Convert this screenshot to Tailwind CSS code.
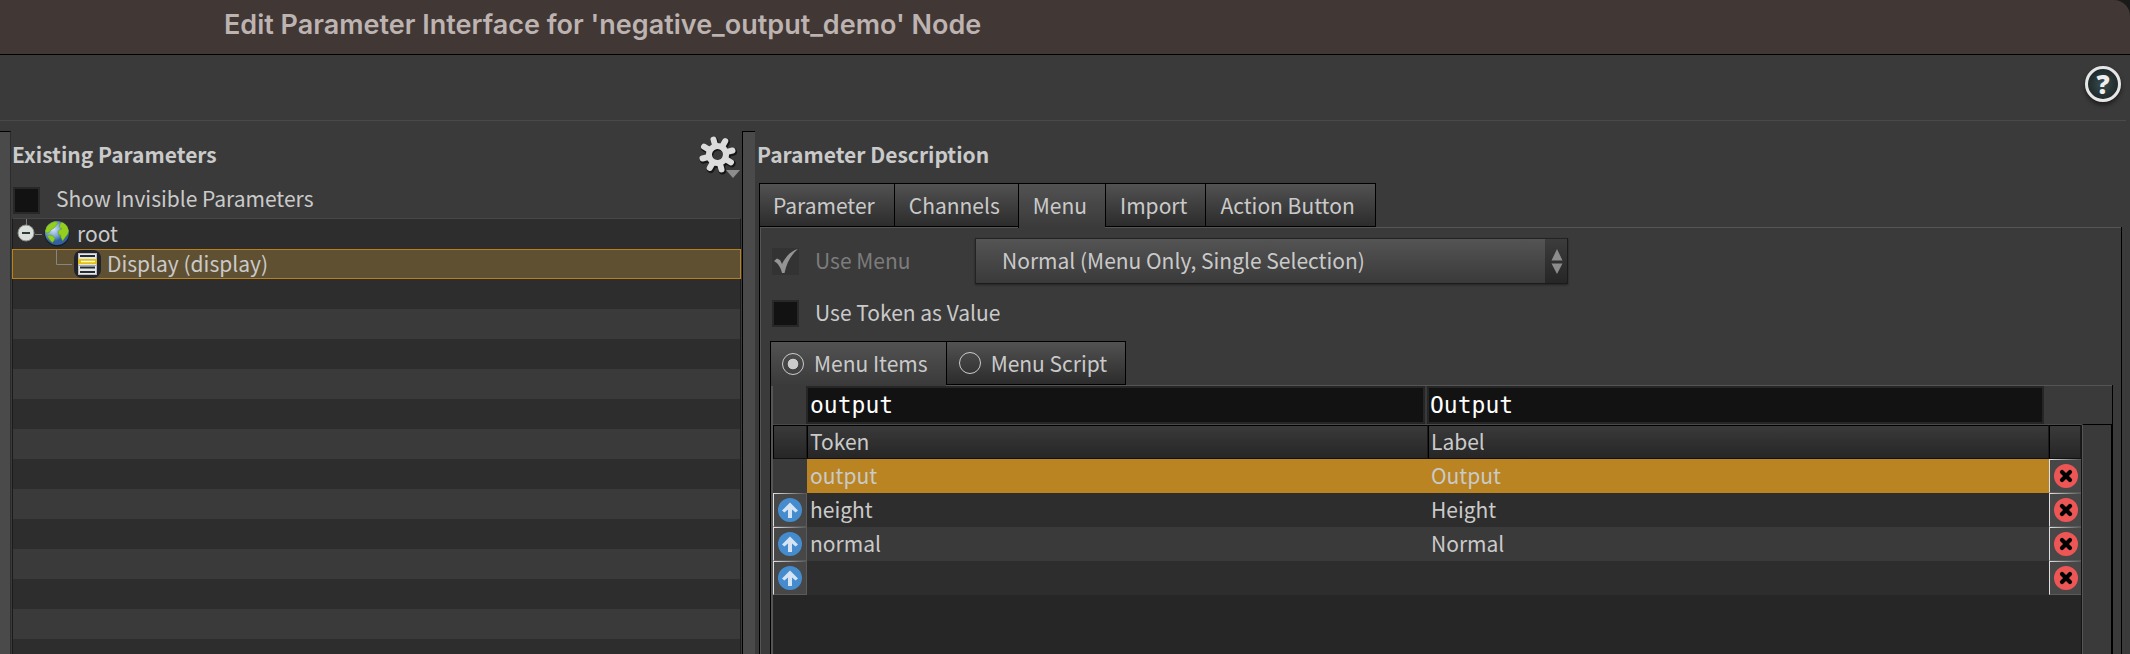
<!DOCTYPE html>
<html lang="en">
<head>
<meta charset="utf-8">
<title>Edit Parameter Interface</title>
<script src="https://cdn.jsdelivr.net/npm/@tailwindcss/browser@4"></script>
</head>
<body class="flex h-screen flex-col overflow-hidden bg-[#3a3a3a] font-['Noto_Sans_CJK_SC','Noto_Sans',sans-serif] text-[21px] leading-[30px] text-[#cacaca]">

<svg class="hidden" aria-hidden="true">
  <symbol id="up" viewBox="0 0 24 24">
    <circle cx="12" cy="12" r="12" fill="#458ccf"/>
    <path d="M12 4.600 20 12.600 17.600 14.600 14 11.400V20H10V11.400L6.400 14.600 4 12.600Z" fill="#d5e3f3"/>
  </symbol>
  <symbol id="del" viewBox="0 0 24 24">
    <circle cx="12" cy="12" r="12" fill="#ee5656"/>
    <path d="M8 8 16 16M16 8 8 16" stroke="#000" stroke-width="4.200" stroke-linecap="round"/>
  </symbol>
</svg>

<header class="shrink-0 bg-[#1a1a1a]">
  <h1 class="h-[55px] rounded-tr-2xl border-b border-black bg-[#413735] pl-[224px] font-['Inter',sans-serif] text-[27px] leading-[50px] font-semibold whitespace-nowrap text-[#bdb3b1]">Edit Parameter Interface for 'negative_output_demo' Node</h1>
</header>

<div class="mr-1 flex h-[66px] shrink-0 items-center justify-end border-b border-[#4a4a4a] pr-[5px]">
  <button type="button" aria-label="Help" class="-mt-2 flex size-9 items-center justify-center rounded-full border-[3px] border-[#e6e6e6] bg-radial from-[#3a4c4e] to-[#141d1e] font-['Open_Sans',sans-serif] text-[26px] leading-none font-extrabold text-[#eeeeee] shadow-[0_3px_4px_rgba(0,0,0,0.5)]">?</button>
</div>

<main class="grid min-h-0 flex-1 grid-cols-[742fr_1388fr]">
  <section class="flex min-w-0">
    <div class="mt-[10px] w-[11px] shrink-0 border-t border-r border-t-black border-r-[#2c2c2c] bg-[#4a4a4a]"></div>
    <div class="flex min-w-0 flex-1 flex-col pr-px pl-px">
      <div class="flex h-[62px] items-center justify-between pt-1">
        <h2 class="font-bold">Existing Parameters</h2>
        <button type="button" aria-label="Parameter options" class="mt-1 h-[48px] w-[44px]">
          <svg viewBox="0 0 44 48" class="size-full">
            <g transform="translate(20.500 22.500) rotate(-15)" fill="none" stroke-linecap="round">
              <g stroke="#161616" transform="translate(0.500 1.500)"><circle r="8.800" stroke-width="7"/><path stroke-width="7.500" d="M0-10V-15.500M0 10V15.500M-10 0H-15.500M10 0H15.500M7-7 11-11M-7-7-11-11M7 7 11 11M-7 7-11 11"/></g>
              <g stroke="#dcdcdc"><circle r="8.500" stroke-width="6"/><path stroke-width="6" d="M0-10V-15.500M0 10V15.500M-10 0H-15.500M10 0H15.500M7-7 11-11M-7-7-11-11M7 7 11 11M-7 7-11 11"/></g>
            </g>
            <path d="M29 38H43L36 46Z" fill="#8d8d8d"/>
          </svg>
        </button>
      </div>
      <label class="flex h-[35px] items-center gap-4 pb-px pl-px">
        <input type="checkbox" class="size-[27px] appearance-none border-2 border-[#282828] bg-[#121212]">
        <span class="pb-1">Show Invisible Parameters</span>
      </label>
      <ul class="min-h-0 flex-1 border-x border-t border-x-[#1c1c1c] border-t-[#464646] bg-[repeating-linear-gradient(#2d2d2d_0_30px,#3a3a3a_30px_60px)]">
        <li class="flex h-[30px] items-center">
          <svg viewBox="0 0 64 30" class="h-[30px] w-[64px] shrink-0">
            <defs>
              <radialGradient id="sea" cx="0.350" cy="0.350"><stop offset="0" stop-color="#d3e3f5"/><stop offset="0.600" stop-color="#7ba5d6"/><stop offset="1" stop-color="#33609f"/></radialGradient>
              <clipPath id="disc"><circle cx="44" cy="14" r="12"/></clipPath>
            </defs>
            <path d="M13.500 0V8M22 15.500H29" stroke="#7e7e7e"/>
            <circle cx="13" cy="14" r="8" fill="#dbe0dc" stroke="#8a8f8b"/>
            <path d="M9 14H17" stroke="#2d3d3c" stroke-width="2"/>
            <circle cx="44" cy="15" r="12.500" fill="#151c24"/>
            <circle cx="44" cy="14" r="12" fill="url(#sea)"/>
            <g clip-path="url(#disc)" fill="#93cf1c" stroke="#5d9a1c" stroke-width="0.500">
              <path d="M32 12 34 7 38 4 41.500 2.500 45 3.500 43 6.700 40.700 9.300 38 10.700 36.300 13.500 33 14Z"/>
              <path d="M34 16.700 37 16 39.700 16.700 42 19.300 41 21.500 39.700 23.500 37.500 22Z"/>
              <path d="M47.300 4 50 3 54 6 56 11.300 54.700 15.300 52 18.700 49.700 22 48 18.700 47.500 16 45.300 15.300 45 12.500 47 10.500 49 10 46.300 8Z"/>
            </g>
          </svg>
          <span class="pb-[2px]">root</span>
        </li>
        <li class="-mx-px flex h-[30px] items-center border border-[#bb7f1e] bg-[#605032]">
          <svg viewBox="0 0 94 28" class="h-[28px] w-[94px] shrink-0">
            <path d="M43.500 0V14.500H59" fill="none" stroke="#858585"/>
            <rect x="61" y="0" width="27" height="28" rx="8" fill="#23232e"/>
            <rect x="65.500" y="3.500" width="18" height="21" fill="#e4e8e4" stroke="#b9bcb9"/>
            <path d="M66 15.500H83" stroke="#a6aaa6"/>
            <path d="M65 9H84V14H65Z" fill="#e2c013"/>
            <path d="M68 11.500H82" stroke="#fff8c8" stroke-width="1.500"/>
            <path d="M67 6H82M67 17.500H82M67 22H82" stroke="#272b38" stroke-width="1.800"/>
          </svg>
          <span class="pb-[2px]">Display (display)</span>
        </li>
      </ul>
    </div>
  </section>

  <section class="flex min-w-0">
    <div class="mt-[10px] w-[13px] shrink-0 border-t border-l border-black bg-[#4a4a4a]"></div>
    <div class="flex min-w-0 flex-1 flex-col pr-2 pl-1">
      <h2 class="flex h-[62px] items-center pt-1 font-bold"><span class="-ml-[2px]">Parameter Description</span></h2>
      <div role="tablist" class="relative z-10 flex h-11 text-[21px]">
        <button role="tab" class="border-y border-l border-black bg-linear-to-b from-[#525252] to-[#2c2c2c] pr-[19px] pl-[13px]">Parameter</button>
        <button role="tab" class="border-y border-l border-black bg-linear-to-b from-[#525252] to-[#2c2c2c] pr-[18px] pl-[14px]">Channels</button>
        <button role="tab" aria-selected="true" class="-mb-px border-t border-l border-black bg-linear-to-b from-[#525252] to-[#3a3a3a] pr-[18px] pb-[2px] pl-[14px]">Menu</button>
        <button role="tab" class="border-y border-l border-black bg-linear-to-b from-[#525252] to-[#2c2c2c] pr-[18px] pl-[14px]">Import</button>
        <button role="tab" class="border border-black bg-linear-to-b from-[#525252] to-[#2c2c2c] pr-5 pl-[14px]">Action Button</button>
      </div>
      <div class="flex min-h-0 flex-1 flex-col border-x border-black">
        <div class="flex min-h-0 flex-1 flex-col border-t border-l border-[#555555] pr-2 pl-[9px]">
          <div class="flex h-[66px] items-center">
            <label class="flex w-[205px] items-center gap-4 pl-[2px] text-[#7c7c7c]">
              <span class="relative size-[27px]">
                <input type="checkbox" checked disabled class="block size-[27px] appearance-none bg-[#333333]">
                <svg viewBox="0 0 27 27" class="pointer-events-none absolute inset-0"><path d="M2 13 5 10.500 8 12 10 16C14 8 19 3 26 1 19 7 15 14 12.500 25H10C9 20 6 15 2 13Z" fill="#949494"/></svg>
              </span>
              <span class="pb-[2px]">Use Menu</span>
            </label>
            <div class="relative w-[593px] max-w-full">
              <select aria-label="Menu type" class="block h-[46px] w-full appearance-none border border-t-[#232323] border-r-[#1b1b1b] border-b-[#1b1b1b] border-l-[#232323] bg-linear-to-b from-[#545454] to-[#3a3a3a] pr-8 pb-[2px] pl-[26px] shadow-[0_1px_2px_rgba(0,0,0,0.4)]">
                <option>Normal (Menu Only, Single Selection)</option>
              </select>
              <div class="pointer-events-none absolute inset-y-px right-px w-[22px] bg-linear-to-b from-[#3c3c3c] to-[#262626]">
                <svg viewBox="0 0 22 44" class="size-full"><path d="M6.500 21.500 12 10 17.500 21.500ZM6.500 24.500 12 35 17.500 24.500Z" fill="#8c8c8c"/></svg>
              </div>
            </div>
          </div>
          <label class="mt-[2px] flex h-[35px] items-center gap-4 pb-px pl-[2px]">
            <input type="checkbox" class="size-[27px] appearance-none border-2 border-[#282828] bg-[#121212]">
            <span class="pb-[2px]">Use Token as Value</span>
          </label>
          <div class="relative z-10 mt-[10px] flex h-11">
            <label class="-mb-px flex items-center gap-[10px] border-t border-l border-black bg-linear-to-b from-[#525252] to-[#3a3a3a] pr-[18px] pl-[11px]">
              <input type="radio" name="src" checked class="size-[22px] appearance-none rounded-full border border-[#cccccc] checked:bg-radial checked:from-[#cccccc] checked:from-35% checked:to-transparent checked:to-40%">
              <span class="pb-[2px]">Menu Items</span>
            </label>
            <label class="flex items-center gap-[10px] border border-black bg-linear-to-b from-[#525252] to-[#2c2c2c] pr-[18px] pl-[12px]">
              <input type="radio" name="src" class="size-[22px] appearance-none rounded-full border border-[#cccccc]">
              <span class="pb-px">Menu Script</span>
            </label>
          </div>
          <div class="flex min-h-0 flex-1 flex-col border-x border-black">
            <div class="flex min-h-0 flex-1 flex-col border-t border-l-2 border-[#555555]">
              <div class="flex gap-[2px] pr-[68px] pl-[33px] font-['DejaVu_Sans_Mono',monospace] text-[23px] leading-[34px] text-white">
                <input aria-label="Token" value="output" class="h-[38px] min-w-0 flex-1 border-2 border-[#262626] bg-[#121212] px-[2px] pb-px">
                <input aria-label="Label" value="Output" class="h-[38px] min-w-0 flex-1 border-2 border-[#262626] bg-[#121212] px-px pb-px">
              </div>
              <div class="flex min-h-0 flex-1 border-t border-[#4a4a4a]">
                <div class="min-w-0 flex-1 border-r border-[#141414] bg-[#262626]">
                  <table class="w-full table-fixed border-separate border-spacing-0 text-left leading-[28px]">
                    <colgroup><col class="w-[34px]"><col><col><col class="w-[32px]"></colgroup>
                    <thead>
                      <tr class="h-[34px]">
                        <th class="border border-t-black border-r-[#1a1a1a] border-b-[#111111] border-l-black bg-linear-to-b from-[#3a3a3a] to-[#262626] p-0"></th>
                        <th class="border border-t-black border-r-[#1a1a1a] border-b-[#111111] border-l-black bg-linear-to-b from-[#3a3a3a] to-[#262626] p-0 pb-[2px] pl-[2px] font-normal">Token</th>
                        <th class="border border-t-black border-r-[#1a1a1a] border-b-[#111111] border-l-black bg-linear-to-b from-[#3a3a3a] to-[#262626] p-0 pb-[2px] pl-[2px] font-normal">Label</th>
                        <th class="border border-t-black border-r-[#1a1a1a] border-b-[#111111] border-l-black bg-linear-to-b from-[#3a3a3a] to-[#262626] p-0"></th>
                      </tr>
                    </thead>
                    <tbody>
                      <tr class="h-[34px] bg-[#b98421]">
                        <td class="bg-[#3a3a3a] p-0"></td>
                        <td class="p-0 pb-[2px] pl-[3px]">output</td>
                        <td class="p-0 pb-[2px] pl-[3px]">Output</td>
                        <td class="p-0"><button type="button" aria-label="Delete output" class="flex h-[34px] w-full items-center justify-center border-b border-l border-b-[#5a5a5a] border-l-[#e0e0e0] bg-[#474747] bg-[linear-gradient(to_right,#e0e0e0,#555555)] bg-[length:100%_1px] bg-no-repeat"><svg class="size-6"><use href="#del"/></svg></button></td>
                      </tr>
                      <tr class="h-[34px] bg-[#2d2d2d]">
                        <td class="p-0"><button type="button" aria-label="Move height up" class="flex h-[34px] w-full items-center justify-center border-r border-b border-l border-r-[#5a5a5a] border-b-[#5a5a5a] border-l-[#e0e0e0] bg-[#474747] bg-[linear-gradient(to_right,#e0e0e0,#555555)] bg-[length:100%_1px] bg-no-repeat"><svg class="size-6"><use href="#up"/></svg></button></td>
                        <td class="p-0 pb-[2px] pl-[3px]">height</td>
                        <td class="p-0 pb-[2px] pl-[3px]">Height</td>
                        <td class="p-0"><button type="button" aria-label="Delete height" class="flex h-[34px] w-full items-center justify-center border-b border-l border-b-[#5a5a5a] border-l-[#e0e0e0] bg-[#474747] bg-[linear-gradient(to_right,#e0e0e0,#555555)] bg-[length:100%_1px] bg-no-repeat"><svg class="size-6"><use href="#del"/></svg></button></td>
                      </tr>
                      <tr class="h-[34px] bg-[#3a3a3a]">
                        <td class="p-0"><button type="button" aria-label="Move normal up" class="flex h-[34px] w-full items-center justify-center border-r border-b border-l border-r-[#5a5a5a] border-b-[#5a5a5a] border-l-[#e0e0e0] bg-[#474747] bg-[linear-gradient(to_right,#e0e0e0,#555555)] bg-[length:100%_1px] bg-no-repeat"><svg class="size-6"><use href="#up"/></svg></button></td>
                        <td class="p-0 pb-[2px] pl-[3px]">normal</td>
                        <td class="p-0 pb-[2px] pl-[3px]">Normal</td>
                        <td class="p-0"><button type="button" aria-label="Delete normal" class="flex h-[34px] w-full items-center justify-center border-b border-l border-b-[#5a5a5a] border-l-[#e0e0e0] bg-[#474747] bg-[linear-gradient(to_right,#e0e0e0,#555555)] bg-[length:100%_1px] bg-no-repeat"><svg class="size-6"><use href="#del"/></svg></button></td>
                      </tr>
                      <tr class="h-[34px] bg-[#2d2d2d]">
                        <td class="p-0"><button type="button" aria-label="Move empty row up" class="flex h-[34px] w-full items-center justify-center border-r border-b border-l border-r-[#5a5a5a] border-b-[#5a5a5a] border-l-[#e0e0e0] bg-[#474747] bg-[linear-gradient(to_right,#e0e0e0,#555555)] bg-[length:100%_1px] bg-no-repeat"><svg class="size-6"><use href="#up"/></svg></button></td>
                        <td class="p-0"></td>
                        <td class="p-0"></td>
                        <td class="p-0"><button type="button" aria-label="Delete empty row" class="flex h-[34px] w-full items-center justify-center border-b border-l border-b-[#5a5a5a] border-l-[#e0e0e0] bg-[#474747] bg-[linear-gradient(to_right,#e0e0e0,#555555)] bg-[length:100%_1px] bg-no-repeat"><svg class="size-6"><use href="#del"/></svg></button></td>
                      </tr>
                    </tbody>
                  </table>
                </div>
                <div class="-mt-px w-[30px] shrink-0 border-t border-r border-l border-t-black border-r-black border-l-[#555555] bg-[#3a3a3a]"></div>
              </div>
            </div>
          </div>
        </div>
      </div>
    </div>
  </section>
</main>
</body>
</html>
